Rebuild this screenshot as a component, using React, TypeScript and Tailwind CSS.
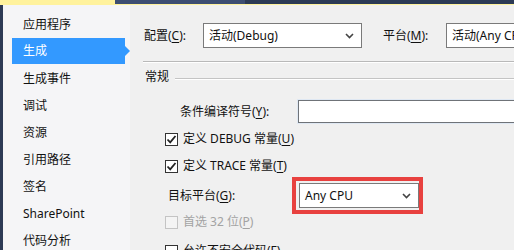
import React from "react";

const font = { fontFamily: '"Noto Sans", "Noto Sans CJK SC", sans-serif' };

function Chevron() {
  return (
    <svg width="9" height="6" viewBox="0 0 9 6" className="shrink-0">
      <path d="M1 1 L4.5 4.5 L8 1" fill="none" stroke="#444" strokeWidth="1.6" />
    </svg>
  );
}

function Select({ text, className }: { text: string; className: string }) {
  return (
    <div className={`h-[25px] bg-white border border-[#7a7a7a] flex items-center pl-[5px] pr-[7px] ${className}`}>
      <span className="flex-1 whitespace-nowrap text-[12px] leading-none">{text}</span>
      <Chevron />
    </div>
  );
}

function Check({ checked, disabled }: { checked?: boolean; disabled?: boolean }) {
  return (
    <div
      className={`w-[13px] h-[13px] shrink-0 border flex items-center justify-center ${
        disabled ? "border-[#c4c4c4] bg-[#f4f4f4]" : "border-[#333] bg-white"
      }`}
    >
      {checked && (
        <svg width="11" height="11" viewBox="0 0 11 11">
          <path d="M1.5 5.5 L4.2 8.3 L9.5 2" fill="none" stroke="#222" strokeWidth="1.8" />
        </svg>
      )}
    </div>
  );
}

function U({ c }: { c: string }) {
  return <span className="underline underline-offset-[2px]">{c}</span>;
}

const navItems = ["应用程序", "生成", "生成事件", "调试", "资源", "引用路径", "签名", "SharePoint", "代码分析"];

export default function App() {
  return (
    <div className="w-[514px] h-[250px] overflow-hidden flex flex-col text-[12px] text-[#111]" style={font}>
      <div className="h-[5px] flex shrink-0">
        <div className="w-[115px] bg-[#fff29d]" />
        <div className="flex-1 flex flex-col">
          <div className="h-[4px] flex">
            <div className="w-[130px] bg-[#3d4e72]" />
            <div className="flex-1 bg-[#2c3a55]" />
          </div>
          <div className="h-px bg-[#fff29d]" />
        </div>
      </div>
      <div className="flex-1 flex min-h-0">
        <div className="w-[3px] bg-[#2d3a55] shrink-0" />
        <div className="w-[127px] bg-[#f5f5f7] pt-[6px] shrink-0">
          {navItems.map((t, i) =>
            i === 1 ? (
              <div key={t} className="relative h-[27px] ml-[9px] mr-[5px]">
                <div className="h-[26px] bg-[#3399ff] text-white flex items-center pl-[11px]">{t}</div>
                <div className="absolute right-[-5px] top-[8px] w-0 h-0 border-y-[5px] border-y-transparent border-l-[5px] border-l-[#3399ff]" />
              </div>
            ) : (
              <div key={t} className="h-[27px] flex items-center pl-[20px]">
                {t}
              </div>
            )
          )}
        </div>
        <div className="flex-1 bg-[#f0f0f0] flex flex-col min-w-0">
          <div className="flex items-center mt-[18px] pl-[14px]">
            <div className="w-[59px] shrink-0 whitespace-nowrap">
              配置(<U c="C" />):
            </div>
            <Select text="活动(Debug)" className="w-[159px] shrink-0" />
            <div className="w-[63px] ml-[21px] shrink-0 whitespace-nowrap">
              平台(<U c="M" />):
            </div>
            <Select text="活动(Any CPU)" className="w-[160px] shrink-0" />
          </div>
          <div className="mt-[13px] ml-[13px] h-[2px] border-t border-[#b9b9b9] border-b border-b-white shrink-0" />
          <div className="flex items-center mt-[6px] pl-[15px] h-[16px]">
            <span className="whitespace-nowrap">常规</span>
            <div className="flex-1 ml-[6px] mt-[3px] h-[2px] border-t border-[#c4c4c4] border-b border-b-white" />
          </div>
          <div className="flex items-center mt-[15px] pl-[50px]">
            <div className="w-[118px] shrink-0 whitespace-nowrap">
              条件编译符号(<U c="Y" />):
            </div>
            <div className="w-[300px] h-[23px] shrink-0 bg-white border border-[#6f7378] outline outline-1 outline-[#dfe8f3]" />
          </div>
          <div className="flex items-center mt-[8px] pl-[35px] h-[16px]">
            <Check checked />
            <span className="ml-[5px] whitespace-nowrap">
              定义 DEBUG 常量(<U c="U" />)
            </span>
          </div>
          <div className="flex items-center mt-[11px] pl-[35px] h-[16px]">
            <Check checked />
            <span className="ml-[5px] whitespace-nowrap">
              定义 TRACE 常量(<U c="T" />)
            </span>
          </div>
          <div className="flex items-center mt-[3px] pl-[38px]">
            <div className="w-[124px] shrink-0 whitespace-nowrap">
              目标平台(<U c="G" />):
            </div>
            <div className="w-[131px] h-[37px] border-4 border-[#e8413f] flex items-center pl-[3px] shrink-0">
              <Select text="Any CPU" className="w-[120px]" />
            </div>
          </div>
          <div className="flex items-center pl-[35px] h-[16px] text-[#a3a3a3]">
            <Check disabled />
            <span className="ml-[5px] whitespace-nowrap">
              首选 32 位(<U c="P" />)
            </span>
          </div>
          <div className="flex items-center mt-[13px] pl-[35px] h-[16px]">
            <Check />
            <span className="ml-[5px] whitespace-nowrap">
              允许不安全代码(<U c="F" />)
            </span>
          </div>
        </div>
      </div>
    </div>
  );
}
